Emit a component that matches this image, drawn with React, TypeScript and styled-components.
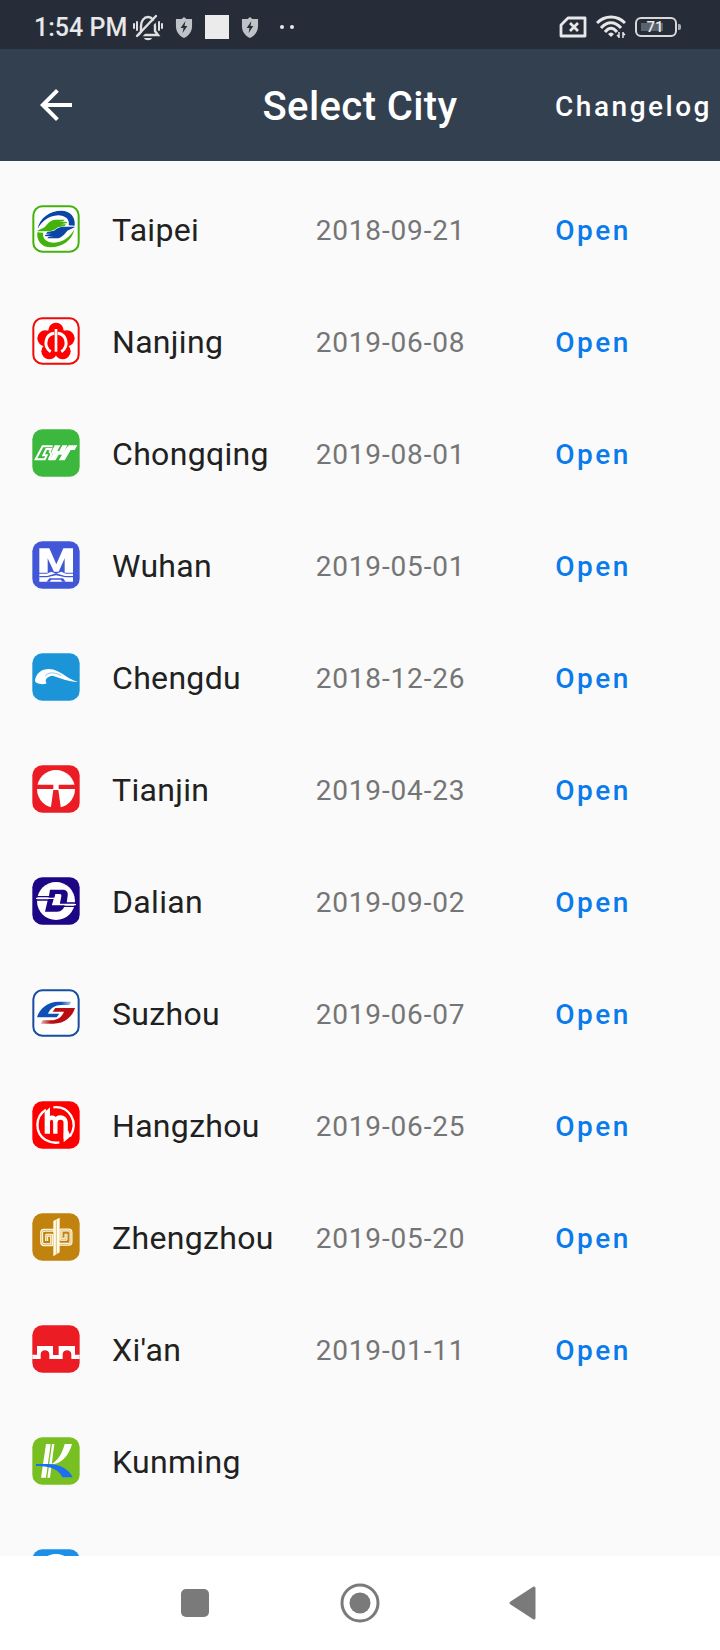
import React from "react";
import styled, { createGlobalStyle } from "styled-components";

const GlobalStyle = createGlobalStyle`
  *, *::before, *::after { box-sizing: border-box; }
  body { margin: 0; background: #fafafa; font-family: Roboto, "Noto Sans", sans-serif; }
  button { font: inherit; border: 0; background: none; padding: 0; cursor: pointer; }
  svg { display: block; flex: none; }
`;

const Screen = styled.div`
  display: flex;
  flex-direction: column;
  height: 100vh;
  min-width: 0;
`;

const StatusBar = styled.div`
  flex: none;
  display: flex;
  align-items: center;
  justify-content: space-between;
  height: 49px;
  padding: 5px 39px 0 34px;
  background: #262d38;
  color: #e8e8e8;
`;

const StatusGroup = styled.div<{ $gap: number }>`
  display: flex;
  align-items: center;
  gap: ${(p) => p.$gap}px;
`;

const Clock = styled.time`
  padding-top: 2px;
  font-size: 25px;
  font-weight: 500;
  line-height: 28px;
  margin-right: -6px;
`;

const Notice = styled.span`
  width: 24px;
  height: 24px;
  background: #ebebeb;
`;

const AppBar = styled.header`
  flex: none;
  display: grid;
  grid-template-columns: 1fr auto 1fr;
  align-items: center;
  height: 112px;
  padding: 0 8px;
  background: #33404f;
  color: #fff;
`;

const BackButton = styled.button`
  justify-self: start;
  padding: 8px 24px;
  color: inherit;
`;

const Title = styled.h1`
  margin: 0;
  padding-top: 4px;
  font-size: 40px;
  line-height: 48px;
  font-weight: 500;
  letter-spacing: 0.01em;
`;

const TextButton = styled.button<{ $color: string }>`
  justify-self: start;
  color: ${(p) => p.$color};
  && {
    padding-top: 4px;
    font-size: 28px;
    line-height: 36px;
    font-weight: 500;
    letter-spacing: 0.09em;
  }
`;

const HeaderAction = styled.div`
  justify-self: end;
`;

const CityList = styled.ul`
  flex: 1;
  min-height: 0;
  margin: 0;
  padding: 12px 0 0;
  list-style: none;
  overflow-y: auto;
  scrollbar-width: none;
  background: #fafafa;
`;

const CityRow = styled.li`
  display: grid;
  grid-template-columns: 80px 17fr 20fr 11fr;
  align-items: center;
  height: 112px;
  padding: 0 33px 0 32px;
`;

const CityName = styled.span`
  padding-top: 2px;
  font-size: 32px;
  line-height: 40px;
  letter-spacing: 0.01em;
  color: #212121;
`;

const DateText = styled.time`
  padding-top: 4px;
  font-size: 28px;
  line-height: 36px;
  letter-spacing: 0.03em;
  color: #757575;
`;

const NavBar = styled.nav`
  flex: none;
  display: grid;
  grid-template-columns: repeat(3, 1fr);
  place-items: center;
  height: 94px;
  padding: 0 112px;
  background: #fff;
  color: #7a7a7a;
`;

const NavButton = styled.button`
  padding: 8px;
  color: inherit;
`;

const Bell = () => (
  <svg width="30" height="27" viewBox="0 0 30 27" fill="none" stroke="#e0e0e0" strokeWidth="2.4" strokeLinecap="round">
    <path d="M7 21H25L22 17V12C22 7 19 3 15 3S8 7 8 12V18L5 21" />
    <path d="M6 24L26 3" stroke="#262d38" strokeWidth="3" />
    <path d="M4 22L23 2" />
    <path d="M11 24H19C18 27 12 27 11 24Z" fill="#e0e0e0" stroke="none" />
    <path d="M1 10V14M4 8V16M26 8V16M29 10V14" strokeWidth="2" />
  </svg>
);

const Shield = () => (
  <svg width="18" height="21" viewBox="0 0 19 21" preserveAspectRatio="none">
    <path d="M9.5 0L12 2H18V9C18 15 14 19 9.5 21C5 19 1 15 1 9V2H7Z" fill="#bfc2c6" />
    <path d="M11 4L6 11H9L8 16L13 9H10Z" fill="#262d38" />
  </svg>
);

const Dots = () => (
  <svg width="16" height="6" viewBox="0 0 16 6" fill="#e8e8e8">
    <circle cx="3" cy="3" r="2" />
    <circle cx="13" cy="3" r="2" />
  </svg>
);

const Sim = () => (
  <svg width="28" height="22" viewBox="0 0 28 22" fill="none" stroke="#e8e8e8" strokeWidth="2.8" strokeLinejoin="round">
    <path d="M9 2H26V20H2V9Z" />
    <path d="M11 7L19 15M19 7L11 15" />
  </svg>
);

const Wifi = () => (
  <svg width="30" height="24" viewBox="0 0 30 24" fill="none" stroke="#e8e8e8" strokeWidth="3">
    <path d="M1 8C9 0 21 0 29 8M5 13C11 6 19 6 25 13M9 17C13 12 17 12 21 17" />
    <path d="M12 19C14 17 16 17 18 19L15 22Z" fill="#e8e8e8" stroke="none" />
    <path d="M23 17V23M27 17V23M23 22L21 20M27 18L29 20" strokeWidth="1.5" />
  </svg>
);

const BatteryFrame = styled.div`
  display: flex;
  align-items: center;
  gap: 1px;
`;

const BatteryBody = styled.span`
  width: 42px;
  height: 20px;
  padding: 0 5px 0 3px;
  border: 2px solid #d8d8d8;
  border-radius: 6px;
  font-size: 15px;
  line-height: 17px;
  font-weight: 500;
  text-align: center;
  background: linear-gradient(#5c626b, #5c626b) 4px 4px / 22px 8px no-repeat;
`;

const BatteryTip = styled.span`
  width: 3px;
  height: 6px;
  border-radius: 0 2px 2px 0;
  background: #a8abb0;
`;

type LogoProps = { fill: string; border?: string; children: React.ReactNode };

const Logo = ({ fill, border, children }: LogoProps) => (
  <svg width="48" height="48" viewBox="0 0 144 144" aria-hidden="true">
    <rect
      x={border ? 4 : 1}
      y={border ? 4 : 1}
      width={border ? 136 : 142}
      height={border ? 136 : 142}
      rx={border ? 27 : 30}
      fill={fill}
      stroke={border}
      strokeWidth={border ? 6 : 0}
    />
    {children}
  </svg>
);

const crescent = "M17 72C22 38 55 17 88 17C115 17 131 36 128 62L110 61C114 44 100 31 78 31C50 32 28 50 17 72Z";
const hand = "M16 77L38 67C48 54 56 45 70 44L98 44L94 49L80 51L103 50L106 54L86 58L102 58L98 63L78 67C68 75 60 79 48 79L16 79Z";
const swoosh = "M118 38H80C46 38 22 60 15 85H74L82 74H48C54 60 64 49 88 48H112Z";
const spiral = "M66 52H36Q29 52 29 59V87Q29 95 36 95H59V67H44V84";

const Taipei = () => (
  <Logo fill="#fff" border="#43b30b">
    <path d={crescent} fill="#0b45a5" />
    <path d={hand} fill="#43b30b" />
    <g transform="rotate(180 72 72)">
      <path d={crescent} fill="#43b30b" />
      <path d={hand} fill="#0b45a5" />
    </g>
  </Logo>
);

const Nanjing = () => (
  <Logo fill="#fff" border="#f00a0a">
    <g fill="#f00">
      <circle cx="72" cy="40" r="23" />
      <circle cx="104" cy="64" r="24" />
      <circle cx="92" cy="103" r="24" />
      <circle cx="52" cy="103" r="24" />
      <circle cx="40" cy="64" r="24" />
      <circle cx="72" cy="74" r="36" />
    </g>
    <g fill="none" stroke="#fff" strokeWidth="9">
      <path d="M56 104C32 88 40 52 67 49M88 104C112 88 104 52 77 49" />
      <path d="M72 36V104" strokeWidth="8" />
    </g>
  </Logo>
);

const Chongqing = () => (
  <Logo fill="#3db83e">
    <path d="M62 52H32L11 91H38L44 79H34L43 60H57L53 68L58 76L50 93" fill="none" stroke="#fff" strokeWidth="6" />
    <path d="M68 49H85L76 66H82L91 49H106L92 77H80L70 94H52L62 76L58 70Z" fill="#fff" />
    <path d="M110 49H136L128 63H116L98 94H80L98 64Z" fill="#fff" />
  </Logo>
);

const Wuhan = () => (
  <Logo fill="#4257d7">
    <path d="M22 22H52L73 70L94 22H123V95H98V52L80 92H66L47 52V95H22Z" fill="#fff" />
    <path d="M22 98H44L58 92L72 98L88 92L101 98H123V122H22Z" fill="#fff" />
    <path d="M22 105H46L72 97L99 105H123V109H100L72 103L45 109H22ZM44 122L52 112H93L101 122H90L87 116H57L54 122Z" fill="#4257d7" />
  </Logo>
);

const Chengdu = () => (
  <Logo fill="#1c94d8">
    <path d="M9 82C12 62 28 48 50 48C82 48 98 74 138 87C108 85 86 76 62 68C46 70 36 80 44 91C32 97 7 92 9 82Z" fill="#fff" />
    <path d="M40 68C52 56 70 58 88 68" fill="none" stroke="#1c94d8" strokeWidth="1.5" />
  </Logo>
);

const Tianjin = () => (
  <Logo fill="#ec1c24">
    <circle cx="72" cy="72" r="57" fill="#fff" />
    <path d="M12 59H64V72H12ZM80 59H132V72H80ZM64 75H79L87 132H56Z" fill="#ec1c24" />
  </Logo>
);

const Dalian = () => (
  <Logo fill="#1d0585">
    <circle cx="72" cy="72" r="57" fill="#fff" />
    <path d="M54 38H92C104 38 109 46 107 56L104 78H84L88 58C89 53 87 51 83 51H70L62 84H98C96 96 88 104 76 104H39L46 74L50 62Z" fill="#1d0585" />
    <path d="M12 64H68L62 83H132" fill="none" stroke="#fff" strokeWidth="4" />
    <path d="M12 59H52M12 69H50M84 78H132M94 88H132" stroke="#1d0585" strokeWidth="4" />
  </Logo>
);

const Suzhou = () => (
  <Logo fill="#fff" border="#174d9e">
    <defs>
      <linearGradient id="suzhouBlue">
        <stop offset="0.7" stopColor="#0f50b4" />
        <stop offset="1" stopColor="#0f50b4" stopOpacity="0.3" />
      </linearGradient>
      <linearGradient id="suzhouRed">
        <stop offset="0.7" stopColor="#b80d12" />
        <stop offset="1" stopColor="#b80d12" stopOpacity="0.3" />
      </linearGradient>
    </defs>
    <path d={swoosh} fill="url(#suzhouBlue)" />
    <path d={swoosh} fill="url(#suzhouRed)" transform="rotate(180 72 71)" />
  </Logo>
);

const Hangzhou = () => (
  <Logo fill="#f00">
    <g fill="none" stroke="#fff">
      <path d="M42 26C8 46 8 96 40 116C54 124 68 127 82 124M64 19C112 14 142 64 114 106" strokeWidth="7" />
      <path d="M70 98V60M70 62C72 45 100 45 101 64V114" strokeWidth="13" />
      <path d="M46 62C50 47 68 45 70 62" strokeWidth="13" />
    </g>
    <path d="M38 98V34L54 19V98ZM95 96V124L116 106L108 88Z" fill="#fff" />
  </Logo>
);

const Zhengzhou = () => (
  <Logo fill="#c2820e">
    <g fill="none" strokeLinejoin="round">
      <g stroke="#fffbe8" strokeWidth="9">
        <path d={spiral} />
        <path d={spiral} transform="rotate(180 73 73)" />
      </g>
      <g stroke="#c2820e" strokeWidth="1.5">
        <path d={spiral} />
        <path d={spiral} transform="rotate(180 73 73)" />
      </g>
    </g>
    <path d="M64 24L83 14V118L64 130Z" fill="#fffbe8" />
    <path d="M73 22V124" stroke="#c2820e" strokeWidth="1.5" />
  </Logo>
);

const Xian = () => (
  <Logo fill="#ec1c24">
    <path d="M1 89H15V63H63V90H80V63H129V89H143V102H118V88C118 72 92 72 92 88V102H52V88C52 72 26 72 26 88V102H1Z" fill="#fff" />
  </Logo>
);

const Kunming = () => (
  <Logo fill="#78c021">
    <path d="M42 21H56L42 122H27ZM60 21H67L54 122H46ZM98 21H120C112 52 92 76 66 82H58C80 68 90 50 98 21Z" fill="#fff" />
    <path d="M12 81H50C84 81 112 98 122 121H91C84 104 66 87 12 87Z" fill="#1c6ff0" />
  </Logo>
);

const Ring = () => (
  <Logo fill="#1c8fe8">
    <circle cx="72" cy="72" r="57" fill="#fff" />
  </Logo>
);

type City = { id: string; logo: () => React.ReactElement; name?: string; date?: string };

const cities: City[] = [
  { id: "taipei", logo: Taipei, name: "Taipei", date: "2018-09-21" },
  { id: "nanjing", logo: Nanjing, name: "Nanjing", date: "2019-06-08" },
  { id: "chongqing", logo: Chongqing, name: "Chongqing", date: "2019-08-01" },
  { id: "wuhan", logo: Wuhan, name: "Wuhan", date: "2019-05-01" },
  { id: "chengdu", logo: Chengdu, name: "Chengdu", date: "2018-12-26" },
  { id: "tianjin", logo: Tianjin, name: "Tianjin", date: "2019-04-23" },
  { id: "dalian", logo: Dalian, name: "Dalian", date: "2019-09-02" },
  { id: "suzhou", logo: Suzhou, name: "Suzhou", date: "2019-06-07" },
  { id: "hangzhou", logo: Hangzhou, name: "Hangzhou", date: "2019-06-25" },
  { id: "zhengzhou", logo: Zhengzhou, name: "Zhengzhou", date: "2019-05-20" },
  { id: "xian", logo: Xian, name: "Xi'an", date: "2019-01-11" },
  { id: "kunming", logo: Kunming, name: "Kunming" },
  { id: "next", logo: Ring },
];

export default function App() {
  return (
    <Screen>
      <GlobalStyle />
      <StatusBar>
        <StatusGroup $gap={12}>
          <Clock>1:54 PM</Clock>
          <Bell />
          <Shield />
          <Notice />
          <Shield />
          <StatusGroup $gap={0}>
            <svg width="8" height="6" />
            <Dots />
          </StatusGroup>
        </StatusGroup>
        <StatusGroup $gap={9}>
          <Sim />
          <Wifi />
          <BatteryFrame>
            <BatteryBody>71</BatteryBody>
            <BatteryTip />
          </BatteryFrame>
        </StatusGroup>
      </StatusBar>
      <AppBar>
        <BackButton type="button" aria-label="Back">
          <svg width="48" height="48" viewBox="0 0 24 24" fill="#fff">
            <path d="M20 11H7.83l5.59-5.59L12 4l-8 8 8 8 1.41-1.41L7.83 13H20v-2z" />
          </svg>
        </BackButton>
        <Title>Select City</Title>
        <HeaderAction>
          <TextButton type="button" $color="#fff">Changelog</TextButton>
        </HeaderAction>
      </AppBar>
      <CityList>
        {cities.map(({ id, logo: CityLogo, name, date }) => (
          <CityRow key={id}>
            <CityLogo />
            {name && <CityName>{name}</CityName>}
            {date && <DateText dateTime={date}>{date}</DateText>}
            {date && (
              <TextButton type="button" $color="#0a7aec" aria-label={`Open ${name}`}>
                Open
              </TextButton>
            )}
          </CityRow>
        ))}
      </CityList>
      <NavBar>
        <NavButton type="button" aria-label="Recent apps">
          <svg width="28" height="28" viewBox="0 0 28 28">
            <rect width="28" height="28" rx="5" fill="currentColor" />
          </svg>
        </NavButton>
        <NavButton type="button" aria-label="Home">
          <svg width="40" height="40" viewBox="0 0 40 40">
            <circle cx="20" cy="20" r="18" fill="none" stroke="currentColor" strokeWidth="3" />
            <circle cx="20" cy="20" r="10.5" fill="currentColor" />
          </svg>
        </NavButton>
        <NavButton type="button" aria-label="Back">
          <svg width="32" height="34" viewBox="0 0 32 34">
            <path d="M2 17L25 2V32Z" fill="currentColor" stroke="currentColor" strokeWidth="3" strokeLinejoin="round" />
          </svg>
        </NavButton>
      </NavBar>
    </Screen>
  );
}
